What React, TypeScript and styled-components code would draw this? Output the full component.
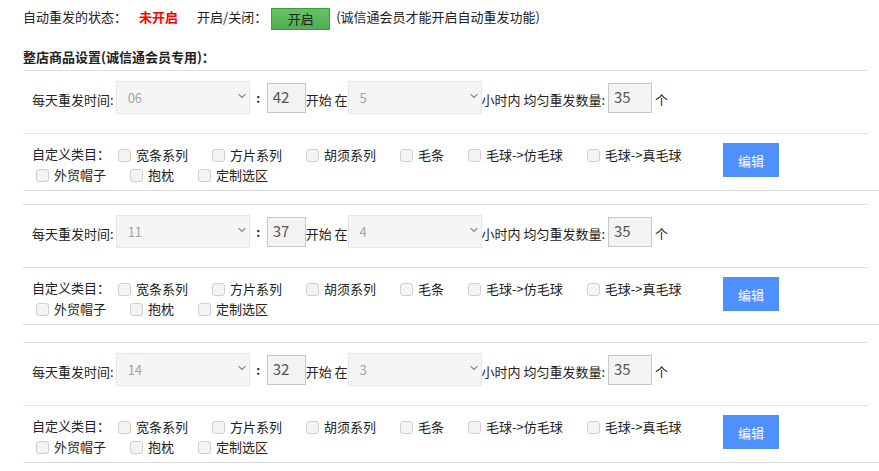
import { createGlobalStyle, styled } from 'styled-components'
import { ChevronDown } from 'lucide-react'

const GlobalStyle = createGlobalStyle`
  body {
    margin: 0;
    background: #fff;
    color: #222;
    font-family: "Noto Sans CJK SC", "Noto Sans", sans-serif;
    font-size: 13px;
  }
`

type Block = {
  hour: string
  minute: string
  span: string
  count: string
  gap: number
}

const blocks: Block[] = [
  { hour: '06', minute: '42', span: '5', count: '35', gap: 0 },
  { hour: '11', minute: '37', span: '4', count: '35', gap: 13 },
  { hour: '14', minute: '32', span: '3', count: '35', gap: 17 },
]

const categories = [
  '宽条系列',
  '方片系列',
  '胡须系列',
  '毛条',
  '毛球->仿毛球',
  '毛球->真毛球',
  '外贸帽子',
  '抱枕',
  '定制选区',
]

function Dropdown({ value }: { value: string }) {
  return (
    <SelectBox>
      <Select disabled value={value} onChange={() => {}}>
        <option value={value}>{value}</option>
      </Select>
      <Arrow>
        <ChevronDown size={12} strokeWidth={3} color="#9a9a9a" />
      </Arrow>
    </SelectBox>
  )
}

export default function App() {
  return (
    <Page>
      <GlobalStyle />
      <TopBar>
        <Text>自动重发的状态：</Text>
        <Status>未开启</Status>
        <Text>开启/关闭：</Text>
        <GreenBtn>开启</GreenBtn>
        <Note>(诚信通会员才能开启自动重发功能)</Note>
      </TopBar>
      <Heading>整店商品设置(诚信通会员专用)：</Heading>

      {blocks.map((b, i) => (
        <BlockWrap key={i} $gap={b.gap}>
          <TimeRow>
            <RowLabel>每天重发时间:</RowLabel>
            <Dropdown value={b.hour} />
            <Colon>:</Colon>
            <NumInput $w={39} value={b.minute} readOnly />
            <Inline>开始 在</Inline>
            <Dropdown value={b.span} />
            <Inline>小时内 均匀重发数量: </Inline>
            <NumInput $w={44} value={b.count} readOnly />
            <Inline> 个</Inline>
          </TimeRow>
          <CategoryRow>
            <CategoryArea>
              <CatTitle>自定义类目：</CatTitle>
              {categories.map(c => (
                <CatItem key={c}>
                  <Check type="checkbox" disabled />
                  <span>{c}</span>
                </CatItem>
              ))}
            </CategoryArea>
            <EditBtn>编辑</EditBtn>
          </CategoryRow>
        </BlockWrap>
      ))}
    </Page>
  )
}

const Page = styled.div`
  width: 879px;
`

const TopBar = styled.div`
  display: flex;
  align-items: flex-start;
  padding: 8px 0 0 23px;
  height: 22px;
`

const Text = styled.span`
  line-height: 17px;
`

const Status = styled.span`
  line-height: 17px;
  color: #f00;
  font-weight: 700;
  margin: 0 19px 0 12px;
`

const GreenBtn = styled.button`
  width: 59px;
  height: 22px;
  margin-left: 4px;
  padding: 0;
  border: 1px solid #3f9a3f;
  background: linear-gradient(#66c266, #4fae4f);
  color: #222;
  font-family: inherit;
  font-size: 13px;
  line-height: 18px;
`

const Note = styled.span`
  line-height: 17px;
  margin-left: 6px;
`

const Heading = styled.div`
  margin: 18px 0 5px 23px;
  font-weight: 700;
  line-height: 17px;
`

const BlockWrap = styled.div<{ $gap: number }>`
  margin: ${p => p.$gap}px 0 0 23px;
  border-bottom: 1px solid #dedede;
`

const TimeRow = styled.div`
  display: flex;
  align-items: center;
  margin-right: 12px;
  padding: 10px 0 19px 9px;
  border-top: 1px solid #dedede;
`

const RowLabel = styled.span`
  margin-right: 2px;
  padding-top: 4px;
`

const Inline = styled.span`
  white-space: pre;
  padding-top: 4px;
`

const SelectBox = styled.div`
  position: relative;
  width: 134px;
  height: 33px;
`

const Select = styled.select`
  appearance: none;
  width: 100%;
  height: 100%;
  margin: 0;
  padding: 0 0 0 11px;
  border: 1px solid #e6e6e6;
  border-radius: 0;
  background: #f5f5f5;
  color: #a3a3a3;
  opacity: 1;
  font-family: inherit;
  font-size: 13px;
`

const Arrow = styled.span`
  position: absolute;
  right: 2px;
  top: 9px;
  display: flex;
`

const Colon = styled.span`
  width: 17px;
  text-align: center;
  font-weight: 600;
  font-size: 12px;
`

const NumInput = styled.input<{ $w: number }>`
  box-sizing: border-box;
  width: ${p => p.$w}px;
  height: 30px;
  margin: 0;
  padding: 0 0 3px 5px;
  border: 1px solid #c8c8c8;
  background: #f3f3f3;
  color: #555;
  font-family: inherit;
  font-size: 15px;
  outline: none;
`

const CategoryRow = styled.div`
  display: flex;
  align-items: flex-start;
  margin-right: 12px;
  padding: 10px 0 6px 9px;
  border-top: 1px solid #dedede;
`

const CategoryArea = styled.div`
  flex: 0 0 690px;
  display: flex;
  flex-wrap: wrap;
  align-items: center;
`

const CatTitle = styled.span`
  line-height: 20px;
  margin-right: 4px;
`

const CatItem = styled.label`
  display: inline-flex;
  align-items: center;
  gap: 5px;
  height: 20px;
  padding-left: 4px;
  margin-right: 20px;
  white-space: pre;
`

const Check = styled.input`
  appearance: none;
  width: 13px;
  height: 13px;
  margin: 2px 0 0;
  border: 1px solid #cfcfcf;
  border-radius: 3px;
  background: #f4f4f4;
`

const EditBtn = styled.button`
  width: 56px;
  height: 34px;
  margin: -1px 0 0 1px;
  padding: 0;
  border: none;
  background: #4d90fe;
  color: #fff;
  font-family: inherit;
  font-size: 13px;
`
